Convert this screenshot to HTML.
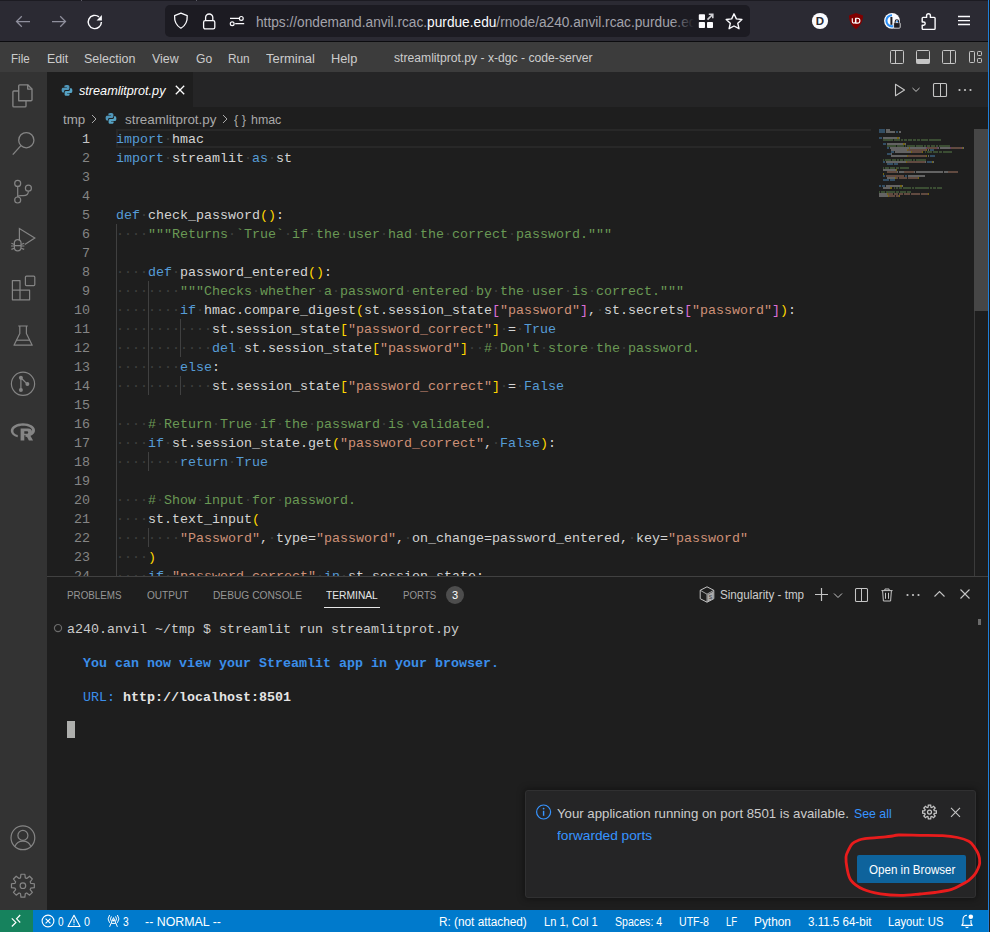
<!DOCTYPE html>
<html><head><meta charset="utf-8"><style>
html,body{margin:0;padding:0;}
body{width:990px;height:932px;overflow:hidden;position:relative;background:#1e1e1e;font-family:"Liberation Sans",sans-serif;}
.r,.t,.s{position:absolute;}
.t{white-space:pre;transform-origin:0 0;}
.m{font-family:"Liberation Mono",monospace;font-size:13.333px;line-height:13.333px;}
</style></head><body>
<div class="r" style="left:0px;top:0px;width:990px;height:1px;background:#1c1b22;"></div>
<div class="r" style="left:0px;top:1px;width:990px;height:40px;background:#2b2a33;"></div>
<div class="r" style="left:0px;top:41px;width:990px;height:1px;background:#0c0c0f;"></div>
<div class="r" style="left:81px;top:0px;width:1px;height:1px;background:#5b5b66;"></div>
<div class="r" style="left:196px;top:0px;width:1px;height:1px;background:#5b5b66;"></div>
<svg class="s" style="left:10px;top:10px;" width="30" height="24" viewBox="0 0 30 24"><path d="M6.5 11.5h13.5M11.8 6.2l-5.3 5.3 5.3 5.3" fill="none" stroke="#8f8f9d" stroke-width="1.25"/></svg>
<svg class="s" style="left:46px;top:10px;" width="30" height="24" viewBox="0 0 30 24"><path d="M6 11.5h13.5M14.2 6.2l5.3 5.3-5.3 5.3" fill="none" stroke="#8f8f9d" stroke-width="1.25"/></svg>
<svg class="s" style="left:84px;top:11px;" width="22" height="22" viewBox="0 0 22 22"><path d="M15 5.9A6.6 6.6 0 1 0 17.4 11" fill="none" stroke="#fbfbfe" stroke-width="1.45"/><path d="M12.6 9.4L17.9 4.1v5.3z" fill="#fbfbfe"/></svg>
<div class="r" style="left:165px;top:5px;width:585px;height:32px;background:#1c1b22;border-radius:5px;"></div>
<svg class="s" style="left:170px;top:10px;" width="22" height="22" viewBox="0 0 22 22"><path d="M10.9 3.2l6.3 2.4c.3 5.2-1.6 10-6.3 12.6C6.2 15.6 4.3 10.8 4.6 5.6z" fill="none" stroke="#fbfbfe" stroke-width="1.3" stroke-linejoin="round"/></svg>
<svg class="s" style="left:200px;top:10px;" width="20" height="22" viewBox="0 0 20 22"><path d="M5.6 10.5V7.6a3.6 3.6 0 0 1 7.2 0v2.9" fill="none" stroke="#fbfbfe" stroke-width="1.3"/><rect x="3.6" y="10.6" width="11.2" height="8.3" rx="1.6" fill="none" stroke="#fbfbfe" stroke-width="1.3"/></svg>
<svg class="s" style="left:226px;top:10px;" width="22" height="22" viewBox="0 0 22 22"><path d="M4 8.4h9M9.2 13.7h9" stroke="#fbfbfe" stroke-width="1.3"/><circle cx="15.3" cy="8.4" r="1.9" fill="none" stroke="#fbfbfe" stroke-width="1.2"/><circle cx="6.2" cy="13.7" r="1.9" fill="none" stroke="#fbfbfe" stroke-width="1.2"/></svg>
<div class="t" style="left:255.50px;top:15.35px;font-size:14px;line-height:14px;color:#a3a3ab;font-family:'Liberation Sans', sans-serif;transform:scaleX(0.9772);">https://ondemand.anvil.rcac.<span style="color:#fbfbfe">purdue.edu</span>/rnode/a240.anvil.rcac.purdue.edu</div>
<div class="r" style="left:672px;top:6px;width:22px;height:30px;background:linear-gradient(90deg, rgba(28,27,34,0), #1c1b22);"></div>
<div class="r" style="left:694px;top:6px;width:54px;height:30px;background:#1c1b22;"></div>
<svg class="s" style="left:696px;top:11px;" width="20" height="20" viewBox="0 0 20 20"><rect x="2.8" y="3.2" width="6.2" height="5.8" rx=".8" fill="#fbfbfe"/><rect x="2.8" y="11" width="6.2" height="6" rx=".8" fill="#fbfbfe"/><rect x="11" y="11" width="6" height="6" rx=".8" fill="#fbfbfe"/><path d="M11.5 8.6l5-5M12.8 3.2h4v4" fill="none" stroke="#d0d0d5" stroke-width="1.6"/></svg>
<svg class="s" style="left:723px;top:11px;" width="22" height="20" viewBox="0 0 22 20"><path d="M11 2.8l2.4 5.1 5.5.6-4.1 3.8 1.2 5.4L11 15l-4.9 2.7 1.2-5.4-4.1-3.8 5.5-.6z" fill="none" stroke="#fbfbfe" stroke-width="1.4" stroke-linejoin="round"/></svg>
<svg class="s" style="left:810px;top:11px;" width="20" height="20" viewBox="0 0 20 20"><circle cx="10" cy="10" r="8.1" fill="#fbfbfe"/><text x="10" y="14.3" text-anchor="middle" font-family="Liberation Sans" font-weight="bold" font-size="11.5" fill="#2b2a33">D</text></svg>
<svg class="s" style="left:846px;top:11px;" width="20" height="20" viewBox="0 0 20 20"><path d="M10 2l7 2.5c0 6-2.5 10-7 13.7C5.5 14.5 3 10.5 3 4.5z" fill="#800000"/><path d="M6.3 7.3v3.2a1.6 1.6 0 0 0 3.2 0V7.3M9.9 7.3h1.6a2.4 2.4 0 0 1 0 4.8H9.9z" fill="none" stroke="#fff" stroke-width="1.1"/></svg>
<svg class="s" style="left:882px;top:11px;" width="20" height="20" viewBox="0 0 20 20"><circle cx="10" cy="9.8" r="7.9" fill="#fbfbfe"/><path d="M10 4.2A5.6 5.6 0 1 0 15.6 9.8" fill="none" stroke="#2a8ff7" stroke-width="2.1"/><rect x="8.4" y="6" width="2" height="7.8" fill="#1c1b22"/><rect x="11.6" y="11.6" width="6.6" height="5.6" rx="1" fill="#1c1b22" stroke="#fbfbfe" stroke-width=".8"/><path d="M13.2 11.8v-1.3a1.7 1.7 0 0 1 3.4 0v1.3" fill="none" stroke="#1c1b22" stroke-width="1.1"/></svg>
<svg class="s" style="left:918px;top:9px;" width="22" height="24" viewBox="0 0 22 24"><path d="M5 8.4h3.6V6.6a1.9 1.9 0 0 1 3.8 0v1.8h3.8c.5 0 .9.4.9.9v10.2c0 .5-.4.9-.9.9H5.1c-.5 0-.9-.4-.9-.9v-3.3h1.4a1.6 1.6 0 0 0 0-3.2H4.2V9.3c0-.5.4-.9.8-.9z" fill="none" stroke="#fbfbfe" stroke-width="1.4" stroke-linejoin="round"/></svg>
<svg class="s" style="left:954px;top:11px;" width="20" height="20" viewBox="0 0 20 20"><path d="M4 5.5h12M4 9.6h12M4 13.5h12" stroke="#fbfbfe" stroke-width="1.4"/></svg>
<div class="r" style="left:0px;top:42px;width:988px;height:30px;background:#3c3c3c;"></div>
<div class="t" style="left:11.10px;top:52.19px;font-size:13px;line-height:13px;color:#cccccc;font-family:'Liberation Sans', sans-serif;font-weight:normal;font-style:normal;transform:scaleX(0.8900);">File</div>
<div class="t" style="left:46.50px;top:52.19px;font-size:13px;line-height:13px;color:#cccccc;font-family:'Liberation Sans', sans-serif;font-weight:normal;font-style:normal;transform:scaleX(0.9464);">Edit</div>
<div class="t" style="left:84.40px;top:52.19px;font-size:13px;line-height:13px;color:#cccccc;font-family:'Liberation Sans', sans-serif;font-weight:normal;font-style:normal;transform:scaleX(0.9607);">Selection</div>
<div class="t" style="left:151.90px;top:52.19px;font-size:13px;line-height:13px;color:#cccccc;font-family:'Liberation Sans', sans-serif;font-weight:normal;font-style:normal;transform:scaleX(0.9573);">View</div>
<div class="t" style="left:195.50px;top:52.19px;font-size:13px;line-height:13px;color:#cccccc;font-family:'Liberation Sans', sans-serif;font-weight:normal;font-style:normal;transform:scaleX(0.9306);">Go</div>
<div class="t" style="left:228.40px;top:52.19px;font-size:13px;line-height:13px;color:#cccccc;font-family:'Liberation Sans', sans-serif;font-weight:normal;font-style:normal;transform:scaleX(0.9076);">Run</div>
<div class="t" style="left:266.40px;top:52.19px;font-size:13px;line-height:13px;color:#cccccc;font-family:'Liberation Sans', sans-serif;font-weight:normal;font-style:normal;transform:scaleX(0.9959);">Terminal</div>
<div class="t" style="left:331.40px;top:52.19px;font-size:13px;line-height:13px;color:#cccccc;font-family:'Liberation Sans', sans-serif;font-weight:normal;font-style:normal;transform:scaleX(0.9850);">Help</div>
<div class="t" style="left:394.00px;top:52.14px;font-size:12px;line-height:12px;color:#cccccc;font-family:'Liberation Sans', sans-serif;font-weight:normal;font-style:normal;transform:scaleX(1.0133);">streamlitprot.py - x-dgc - code-server</div>
<svg class="s" style="left:888px;top:48px;" width="18" height="18" viewBox="0 0 18 18"><rect x="2.5" y="2.5" width="13" height="13" rx="1" fill="none" stroke="#c5c5c5"/><path d="M7.5 2.5v13" stroke="#c5c5c5"/></svg>
<svg class="s" style="left:914px;top:48px;" width="18" height="18" viewBox="0 0 18 18"><rect x="2.5" y="2.5" width="13" height="13" rx="1" fill="none" stroke="#c5c5c5"/><rect x="2.5" y="11" width="13" height="4.5" fill="#c5c5c5"/></svg>
<svg class="s" style="left:940px;top:48px;" width="18" height="18" viewBox="0 0 18 18"><rect x="2.5" y="2.5" width="13" height="13" rx="1" fill="none" stroke="#c5c5c5"/><path d="M10.5 2.5v13" stroke="#c5c5c5"/></svg>
<svg class="s" style="left:966px;top:48px;" width="18" height="18" viewBox="0 0 18 18"><rect x="3.5" y="3.5" width="5" height="11" rx=".8" fill="none" stroke="#c5c5c5"/><rect x="11.5" y="3.5" width="4" height="4" rx=".8" fill="none" stroke="#c5c5c5"/><rect x="11.5" y="10.5" width="4" height="4" rx=".8" fill="none" stroke="#c5c5c5"/></svg>
<div class="r" style="left:0px;top:72px;width:47px;height:838px;background:#333333;"></div>
<svg class="s" style="left:0px;top:72px;" width="48" height="48" viewBox="0 0 48 48"><g fill="none" stroke="#858585" stroke-width="1.35" stroke-linejoin="round"><path d="M18.7 28.7V13.8c0-.6.4-1 1-1h8l4.3 4.3v10.6c0 .6-.4 1-1 1z"/><path d="M27.7 12.8v4.3h4.3"/><path d="M18.7 19h-4.8c-.6 0-1 .4-1 1v13.9c0 .6.4 1 1 1h11.1c.6 0 1-.4 1-1v-5.2"/></g></svg>
<svg class="s" style="left:0px;top:120px;" width="48" height="48" viewBox="0 0 48 48"><g fill="none" stroke="#858585" stroke-width="1.3"><circle cx="26.3" cy="20.2" r="7.6"/><path d="M20.9 25.6L12.8 34.6"/></g></svg>
<svg class="s" style="left:0px;top:168px;" width="48" height="48" viewBox="0 0 48 48"><g fill="none" stroke="#858585" stroke-width="1.2"><circle cx="17.7" cy="15.4" r="3"/><circle cx="17.7" cy="32" r="3"/><circle cx="28.4" cy="20.2" r="3"/><path d="M17.7 18.4v10.6M28.4 23.2c0 3.5-2 4.4-5 4.4h-2.5c-2 0-3.2.8-3.2 1.4"/></g></svg>
<svg class="s" style="left:0px;top:216px;" width="48" height="48" viewBox="0 0 48 48"><g fill="none" stroke="#858585" stroke-width="1.2"><path d="M19.4 24.4V12.5L34.8 22l-10 6.4"/><path d="M14.4 26.2a3.4 3.4 0 0 1 6.6 0v5.3a3.3 3.3 0 0 1-6.6 0z"/><path d="M11.4 27.3l3 1.2M24.2 27.3l-3 1.2M11.4 33.4l3-1.2M24.2 33.4l-3-1.2M11 30h3.4M21 30h3.4M14.4 29.6h6.6"/></g></svg>
<svg class="s" style="left:0px;top:264px;" width="48" height="48" viewBox="0 0 48 48"><g fill="none" stroke="#858585" stroke-width="1.2" stroke-linejoin="round"><path d="M12.4 16.6h7.6v9.6h9.6v9.6h-17.2z"/><path d="M20 26.2h-7.6M20 26.2v9.6"/><rect x="25.4" y="12.2" width="9.4" height="9.4" rx="1"/></g></svg>
<svg class="s" style="left:0px;top:312px;" width="48" height="48" viewBox="0 0 48 48"><g fill="none" stroke="#858585" stroke-width="1.2" stroke-linejoin="round"><path d="M18.2 14h9.6M19.8 14v7.6l-5.8 11.6h18.2l-5.8-11.6V14"/><path d="M16.2 28.2h13.8"/></g></svg>
<svg class="s" style="left:0px;top:360px;" width="48" height="48" viewBox="0 0 48 48"><g fill="none" stroke="#858585" stroke-width="1.2"><circle cx="23" cy="23.8" r="11.6"/><path d="M20.9 17.8v12.2M20.9 17.8l6.4 6.3"/></g><g fill="#858585"><circle cx="20.9" cy="17.7" r="2"/><circle cx="27.4" cy="24.1" r="2"/><circle cx="20.9" cy="30" r="2"/></g></svg>
<svg class="s" style="left:0px;top:408px;" width="48" height="48" viewBox="0 0 48 48"><g fill="#858585"><path fill-rule="evenodd" d="M23 15.2c6.7 0 12 3.1 12 7s-4.3 6.3-9.4 6.9l-.1-2.4c3.8-.5 6.6-2.2 6.6-4.5 0-2.7-4.2-4.5-9.1-4.5s-9.6 2.2-9.6 5.2c0 2 1.6 3.4 4.4 4.2l-.1 2.2C13.6 28.3 10.8 25.9 10.8 22.6c0-4.1 5.4-7.4 12.2-7.4z"/><path fill-rule="evenodd" d="M20.6 20.6h7.4c2.4 0 4 1.2 4 3.2 0 1.4-.9 2.4-2.2 2.9l3.3 5.8h-4.2l-2.8-5.2h-1.8v5.2h-3.7zm3.7 2.6v2.6h2.4c.9 0 1.5-.5 1.5-1.3s-.6-1.3-1.5-1.3z"/></g></svg>
<svg class="s" style="left:0px;top:814px;" width="48" height="48" viewBox="0 0 48 48"><g fill="none" stroke="#858585" stroke-width="1.2"><circle cx="22.9" cy="23.8" r="11.9"/><circle cx="22.9" cy="21.4" r="5"/><path d="M15 32.4c1.2-3.3 4.1-5.2 7.9-5.2s6.7 1.9 7.9 5.2"/></g></svg>
<svg class="s" style="left:0px;top:862px;" width="48" height="48" viewBox="0 0 48 48"><g fill="none" stroke="#858585" stroke-width="1.2" stroke-linejoin="round"><path d="M34.33 21.74L34.33 25.66L30.73 26.12L30.15 27.53L32.37 30.40L29.60 33.17L26.73 30.95L25.32 31.53L24.86 35.13L20.94 35.13L20.48 31.53L19.07 30.95L16.20 33.17L13.43 30.40L15.65 27.53L15.07 26.12L11.47 25.66L11.47 21.74L15.07 21.28L15.65 19.87L13.43 17.00L16.20 14.23L19.07 16.45L20.48 15.87L20.94 12.27L24.86 12.27L25.32 15.87L26.73 16.45L29.60 14.23L32.37 17.00L30.15 19.87L30.73 21.28z"/><circle cx="22.9" cy="23.7" r="2.8"/></g></svg>
<div class="r" style="left:47px;top:72px;width:941px;height:35px;background:#252526;"></div>
<div class="r" style="left:47px;top:72px;width:146px;height:35px;background:#1e1e1e;"></div>
<svg class="s" style="left:60.5px;top:83.5px;" width="13" height="13" viewBox="0 0 13 13"><path d="M5.9 1c-2.6 0-2.5 1.1-2.5 1.1v1.2h2.5v.4H2.3S.6 3.5.6 6.1s1.5 2.5 1.5 2.5h.9V7.4s0-1.5 1.5-1.5h2.5s1.4 0 1.4-1.4V2.4S8.6 1 5.9 1z" fill="#4f95b8"/><path d="M6.1 11.8c2.6 0 2.5-1.1 2.5-1.1V9.5H6.1v-.4h3.6s1.7.2 1.7-2.4-1.5-2.5-1.5-2.5H9v1.2s0 1.5-1.5 1.5H5S3.6 6.9 3.6 8.3v2.1s-.2 1.4 2.5 1.4z" fill="#56a3c4"/></svg>
<div class="t" style="left:78.80px;top:83.99px;font-size:13px;line-height:13px;color:#ffffff;font-family:'Liberation Sans', sans-serif;font-weight:normal;font-style:italic;transform:scaleX(0.9732);">streamlitprot.py</div>
<svg class="s" style="left:172px;top:82px;" width="16" height="16" viewBox="0 0 16 16"><path d="M3.8 3.8l8.4 8.4M12.2 3.8l-8.4 8.4" stroke="#ffffff" stroke-width="1.3"/></svg>
<svg class="s" style="left:890px;top:80px;" width="20" height="20" viewBox="0 0 20 20"><path d="M5.5 4.3v11.4l9-5.7z" fill="none" stroke="#c5c5c5" stroke-width="1.1" stroke-linejoin="round"/></svg>
<svg class="s" style="left:910px;top:83px;" width="12" height="12" viewBox="0 0 12 12"><path d="M2.5 5l3.5 3.4L9.5 5" fill="none" stroke="#c5c5c5" stroke-width="1"/></svg>
<svg class="s" style="left:930px;top:80px;" width="20" height="20" viewBox="0 0 20 20"><rect x="3.5" y="3.5" width="13" height="13" rx="1" fill="none" stroke="#c5c5c5" stroke-width="1.1"/><path d="M10.5 3.5v13" stroke="#c5c5c5" stroke-width="1"/></svg>
<svg class="s" style="left:955px;top:80px;" width="20" height="20" viewBox="0 0 20 20"><circle cx="4.5" cy="10" r="1.1" fill="#c5c5c5"/><circle cx="10" cy="10" r="1.1" fill="#c5c5c5"/><circle cx="15.5" cy="10" r="1.1" fill="#c5c5c5"/></svg>
<div class="r" style="left:47px;top:107px;width:941px;height:22px;background:#1e1e1e;"></div>
<div class="t" style="left:63.00px;top:113.39px;font-size:13px;line-height:13px;color:#a9a9a9;font-family:'Liberation Sans', sans-serif;font-weight:normal;font-style:normal;transform:scaleX(1.0276);">tmp</div>
<svg class="s" style="left:88px;top:111px;" width="12" height="16" viewBox="0 0 12 16"><path d="M4 4l4 4-4 4" fill="none" stroke="#a9a9a9" stroke-width="1"/></svg>
<svg class="s" style="left:105px;top:112px;" width="13" height="13" viewBox="0 0 13 13"><path d="M5.9 1c-2.6 0-2.5 1.1-2.5 1.1v1.2h2.5v.4H2.3S.6 3.5.6 6.1s1.5 2.5 1.5 2.5h.9V7.4s0-1.5 1.5-1.5h2.5s1.4 0 1.4-1.4V2.4S8.6 1 5.9 1z" fill="#4f95b8"/><path d="M6.1 11.8c2.6 0 2.5-1.1 2.5-1.1V9.5H6.1v-.4h3.6s1.7.2 1.7-2.4-1.5-2.5-1.5-2.5H9v1.2s0 1.5-1.5 1.5H5S3.6 6.9 3.6 8.3v2.1s-.2 1.4 2.5 1.4z" fill="#56a3c4"/></svg>
<div class="t" style="left:124.80px;top:113.39px;font-size:13px;line-height:13px;color:#a9a9a9;font-family:'Liberation Sans', sans-serif;font-weight:normal;font-style:normal;transform:scaleX(1.0281);">streamlitprot.py</div>
<svg class="s" style="left:219px;top:111px;" width="12" height="16" viewBox="0 0 12 16"><path d="M4 4l4 4-4 4" fill="none" stroke="#a9a9a9" stroke-width="1"/></svg>
<div class="t" style="left:234.40px;top:114.24px;font-size:12px;line-height:12px;color:#a9a9a9;font-family:'Liberation Sans', sans-serif;font-weight:normal;font-style:normal;transform:scaleX(1.0614);">{ }</div>
<div class="t" style="left:251.40px;top:113.39px;font-size:13px;line-height:13px;color:#a9a9a9;font-family:'Liberation Sans', sans-serif;font-weight:normal;font-style:normal;transform:scaleX(0.9528);">hmac</div>
<div class="r" style="left:47px;top:129px;width:941px;height:447px;background:#1e1e1e;"></div>
<div class="r" style="left:116px;top:129px;width:755px;height:19px;background:transparent;box-sizing:border-box;border:2px solid #282828;border-right:none;"></div>
<div class="r" style="left:116px;top:224px;width:1px;height:19px;background:#404040;"></div>
<div class="r" style="left:116px;top:243px;width:1px;height:19px;background:#404040;"></div>
<div class="r" style="left:116px;top:262px;width:1px;height:19px;background:#404040;"></div>
<div class="r" style="left:116px;top:281px;width:1px;height:19px;background:#404040;"></div>
<div class="r" style="left:148px;top:281px;width:1px;height:19px;background:#404040;"></div>
<div class="r" style="left:116px;top:300px;width:1px;height:19px;background:#404040;"></div>
<div class="r" style="left:148px;top:300px;width:1px;height:19px;background:#404040;"></div>
<div class="r" style="left:116px;top:319px;width:1px;height:19px;background:#404040;"></div>
<div class="r" style="left:148px;top:319px;width:1px;height:19px;background:#404040;"></div>
<div class="r" style="left:180px;top:319px;width:1px;height:19px;background:#404040;"></div>
<div class="r" style="left:116px;top:338px;width:1px;height:19px;background:#404040;"></div>
<div class="r" style="left:148px;top:338px;width:1px;height:19px;background:#404040;"></div>
<div class="r" style="left:180px;top:338px;width:1px;height:19px;background:#404040;"></div>
<div class="r" style="left:116px;top:357px;width:1px;height:19px;background:#404040;"></div>
<div class="r" style="left:148px;top:357px;width:1px;height:19px;background:#404040;"></div>
<div class="r" style="left:116px;top:376px;width:1px;height:19px;background:#404040;"></div>
<div class="r" style="left:148px;top:376px;width:1px;height:19px;background:#404040;"></div>
<div class="r" style="left:180px;top:376px;width:1px;height:19px;background:#404040;"></div>
<div class="r" style="left:116px;top:395px;width:1px;height:19px;background:#404040;"></div>
<div class="r" style="left:116px;top:414px;width:1px;height:19px;background:#404040;"></div>
<div class="r" style="left:116px;top:433px;width:1px;height:19px;background:#404040;"></div>
<div class="r" style="left:116px;top:452px;width:1px;height:19px;background:#404040;"></div>
<div class="r" style="left:148px;top:452px;width:1px;height:19px;background:#404040;"></div>
<div class="r" style="left:116px;top:471px;width:1px;height:19px;background:#404040;"></div>
<div class="r" style="left:116px;top:490px;width:1px;height:19px;background:#404040;"></div>
<div class="r" style="left:116px;top:509px;width:1px;height:19px;background:#404040;"></div>
<div class="r" style="left:116px;top:528px;width:1px;height:19px;background:#404040;"></div>
<div class="r" style="left:148px;top:528px;width:1px;height:19px;background:#404040;"></div>
<div class="r" style="left:116px;top:547px;width:1px;height:19px;background:#404040;"></div>
<div class="r" style="left:116px;top:566px;width:1px;height:10px;background:#404040;"></div>
<div class="t m" style="left:82px;top:132.79px;color:#c6c6c6">1</div>
<div class="t m" style="left:116px;top:132.79px;"><span style="color:#569cd6">import</span><span style="color:#404040">·</span><span style="color:#d4d4d4">hmac</span></div>
<div class="t m" style="left:82px;top:151.79px;color:#858585">2</div>
<div class="t m" style="left:116px;top:151.79px;"><span style="color:#569cd6">import</span><span style="color:#404040">·</span><span style="color:#d4d4d4">streamlit</span><span style="color:#404040">·</span><span style="color:#569cd6">as</span><span style="color:#404040">·</span><span style="color:#d4d4d4">st</span></div>
<div class="t m" style="left:82px;top:170.79px;color:#858585">3</div>
<div class="t m" style="left:116px;top:170.79px;"></div>
<div class="t m" style="left:82px;top:189.79px;color:#858585">4</div>
<div class="t m" style="left:116px;top:189.79px;"></div>
<div class="t m" style="left:82px;top:208.79px;color:#858585">5</div>
<div class="t m" style="left:116px;top:208.79px;"><span style="color:#569cd6">def</span><span style="color:#404040">·</span><span style="color:#d4d4d4">check_password</span><span style="color:#ffd700">(</span><span style="color:#ffd700">)</span><span style="color:#d4d4d4">:</span></div>
<div class="t m" style="left:82px;top:227.79px;color:#858585">6</div>
<div class="t m" style="left:116px;top:227.79px;"><span style="color:#404040">·</span><span style="color:#404040">·</span><span style="color:#404040">·</span><span style="color:#404040">·</span><span style="color:#6a9955">&quot;&quot;&quot;Returns</span><span style="color:#404040">·</span><span style="color:#6a9955">`True`</span><span style="color:#404040">·</span><span style="color:#6a9955">if</span><span style="color:#404040">·</span><span style="color:#6a9955">the</span><span style="color:#404040">·</span><span style="color:#6a9955">user</span><span style="color:#404040">·</span><span style="color:#6a9955">had</span><span style="color:#404040">·</span><span style="color:#6a9955">the</span><span style="color:#404040">·</span><span style="color:#6a9955">correct</span><span style="color:#404040">·</span><span style="color:#6a9955">password.&quot;&quot;&quot;</span></div>
<div class="t m" style="left:82px;top:246.79px;color:#858585">7</div>
<div class="t m" style="left:116px;top:246.79px;"></div>
<div class="t m" style="left:82px;top:265.79px;color:#858585">8</div>
<div class="t m" style="left:116px;top:265.79px;"><span style="color:#404040">·</span><span style="color:#404040">·</span><span style="color:#404040">·</span><span style="color:#404040">·</span><span style="color:#569cd6">def</span><span style="color:#404040">·</span><span style="color:#d4d4d4">password_entered</span><span style="color:#ffd700">(</span><span style="color:#ffd700">)</span><span style="color:#d4d4d4">:</span></div>
<div class="t m" style="left:82px;top:284.79px;color:#858585">9</div>
<div class="t m" style="left:116px;top:284.79px;"><span style="color:#404040">·</span><span style="color:#404040">·</span><span style="color:#404040">·</span><span style="color:#404040">·</span><span style="color:#404040">·</span><span style="color:#404040">·</span><span style="color:#404040">·</span><span style="color:#404040">·</span><span style="color:#6a9955">&quot;&quot;&quot;Checks</span><span style="color:#404040">·</span><span style="color:#6a9955">whether</span><span style="color:#404040">·</span><span style="color:#6a9955">a</span><span style="color:#404040">·</span><span style="color:#6a9955">password</span><span style="color:#404040">·</span><span style="color:#6a9955">entered</span><span style="color:#404040">·</span><span style="color:#6a9955">by</span><span style="color:#404040">·</span><span style="color:#6a9955">the</span><span style="color:#404040">·</span><span style="color:#6a9955">user</span><span style="color:#404040">·</span><span style="color:#6a9955">is</span><span style="color:#404040">·</span><span style="color:#6a9955">correct.&quot;&quot;&quot;</span></div>
<div class="t m" style="left:74px;top:303.79px;color:#858585">10</div>
<div class="t m" style="left:116px;top:303.79px;"><span style="color:#404040">·</span><span style="color:#404040">·</span><span style="color:#404040">·</span><span style="color:#404040">·</span><span style="color:#404040">·</span><span style="color:#404040">·</span><span style="color:#404040">·</span><span style="color:#404040">·</span><span style="color:#569cd6">if</span><span style="color:#404040">·</span><span style="color:#d4d4d4">hmac</span><span style="color:#d4d4d4">.</span><span style="color:#d4d4d4">compare_digest</span><span style="color:#ffd700">(</span><span style="color:#d4d4d4">st</span><span style="color:#d4d4d4">.</span><span style="color:#d4d4d4">session_state</span><span style="color:#da70d6">[</span><span style="color:#ce9178">&quot;password&quot;</span><span style="color:#da70d6">]</span><span style="color:#d4d4d4">,</span><span style="color:#404040">·</span><span style="color:#d4d4d4">st</span><span style="color:#d4d4d4">.</span><span style="color:#d4d4d4">secrets</span><span style="color:#da70d6">[</span><span style="color:#ce9178">&quot;password&quot;</span><span style="color:#da70d6">]</span><span style="color:#ffd700">)</span><span style="color:#d4d4d4">:</span></div>
<div class="t m" style="left:74px;top:322.79px;color:#858585">11</div>
<div class="t m" style="left:116px;top:322.79px;"><span style="color:#404040">·</span><span style="color:#404040">·</span><span style="color:#404040">·</span><span style="color:#404040">·</span><span style="color:#404040">·</span><span style="color:#404040">·</span><span style="color:#404040">·</span><span style="color:#404040">·</span><span style="color:#404040">·</span><span style="color:#404040">·</span><span style="color:#404040">·</span><span style="color:#404040">·</span><span style="color:#d4d4d4">st</span><span style="color:#d4d4d4">.</span><span style="color:#d4d4d4">session_state</span><span style="color:#ffd700">[</span><span style="color:#ce9178">&quot;password_correct&quot;</span><span style="color:#ffd700">]</span><span style="color:#404040">·</span><span style="color:#d4d4d4">=</span><span style="color:#404040">·</span><span style="color:#569cd6">True</span></div>
<div class="t m" style="left:74px;top:341.79px;color:#858585">12</div>
<div class="t m" style="left:116px;top:341.79px;"><span style="color:#404040">·</span><span style="color:#404040">·</span><span style="color:#404040">·</span><span style="color:#404040">·</span><span style="color:#404040">·</span><span style="color:#404040">·</span><span style="color:#404040">·</span><span style="color:#404040">·</span><span style="color:#404040">·</span><span style="color:#404040">·</span><span style="color:#404040">·</span><span style="color:#404040">·</span><span style="color:#569cd6">del</span><span style="color:#404040">·</span><span style="color:#d4d4d4">st</span><span style="color:#d4d4d4">.</span><span style="color:#d4d4d4">session_state</span><span style="color:#ffd700">[</span><span style="color:#ce9178">&quot;password&quot;</span><span style="color:#ffd700">]</span><span style="color:#404040">·</span><span style="color:#404040">·</span><span style="color:#6a9955">#</span><span style="color:#404040">·</span><span style="color:#6a9955">Don&#x27;t</span><span style="color:#404040">·</span><span style="color:#6a9955">store</span><span style="color:#404040">·</span><span style="color:#6a9955">the</span><span style="color:#404040">·</span><span style="color:#6a9955">password.</span></div>
<div class="t m" style="left:74px;top:360.79px;color:#858585">13</div>
<div class="t m" style="left:116px;top:360.79px;"><span style="color:#404040">·</span><span style="color:#404040">·</span><span style="color:#404040">·</span><span style="color:#404040">·</span><span style="color:#404040">·</span><span style="color:#404040">·</span><span style="color:#404040">·</span><span style="color:#404040">·</span><span style="color:#569cd6">else</span><span style="color:#d4d4d4">:</span></div>
<div class="t m" style="left:74px;top:379.79px;color:#858585">14</div>
<div class="t m" style="left:116px;top:379.79px;"><span style="color:#404040">·</span><span style="color:#404040">·</span><span style="color:#404040">·</span><span style="color:#404040">·</span><span style="color:#404040">·</span><span style="color:#404040">·</span><span style="color:#404040">·</span><span style="color:#404040">·</span><span style="color:#404040">·</span><span style="color:#404040">·</span><span style="color:#404040">·</span><span style="color:#404040">·</span><span style="color:#d4d4d4">st</span><span style="color:#d4d4d4">.</span><span style="color:#d4d4d4">session_state</span><span style="color:#ffd700">[</span><span style="color:#ce9178">&quot;password_correct&quot;</span><span style="color:#ffd700">]</span><span style="color:#404040">·</span><span style="color:#d4d4d4">=</span><span style="color:#404040">·</span><span style="color:#569cd6">False</span></div>
<div class="t m" style="left:74px;top:398.79px;color:#858585">15</div>
<div class="t m" style="left:116px;top:398.79px;"></div>
<div class="t m" style="left:74px;top:417.79px;color:#858585">16</div>
<div class="t m" style="left:116px;top:417.79px;"><span style="color:#404040">·</span><span style="color:#404040">·</span><span style="color:#404040">·</span><span style="color:#404040">·</span><span style="color:#6a9955">#</span><span style="color:#404040">·</span><span style="color:#6a9955">Return</span><span style="color:#404040">·</span><span style="color:#6a9955">True</span><span style="color:#404040">·</span><span style="color:#6a9955">if</span><span style="color:#404040">·</span><span style="color:#6a9955">the</span><span style="color:#404040">·</span><span style="color:#6a9955">passward</span><span style="color:#404040">·</span><span style="color:#6a9955">is</span><span style="color:#404040">·</span><span style="color:#6a9955">validated.</span></div>
<div class="t m" style="left:74px;top:436.79px;color:#858585">17</div>
<div class="t m" style="left:116px;top:436.79px;"><span style="color:#404040">·</span><span style="color:#404040">·</span><span style="color:#404040">·</span><span style="color:#404040">·</span><span style="color:#569cd6">if</span><span style="color:#404040">·</span><span style="color:#d4d4d4">st</span><span style="color:#d4d4d4">.</span><span style="color:#d4d4d4">session_state</span><span style="color:#d4d4d4">.</span><span style="color:#d4d4d4">get</span><span style="color:#ffd700">(</span><span style="color:#ce9178">&quot;password_correct&quot;</span><span style="color:#d4d4d4">,</span><span style="color:#404040">·</span><span style="color:#569cd6">False</span><span style="color:#ffd700">)</span><span style="color:#d4d4d4">:</span></div>
<div class="t m" style="left:74px;top:455.79px;color:#858585">18</div>
<div class="t m" style="left:116px;top:455.79px;"><span style="color:#404040">·</span><span style="color:#404040">·</span><span style="color:#404040">·</span><span style="color:#404040">·</span><span style="color:#404040">·</span><span style="color:#404040">·</span><span style="color:#404040">·</span><span style="color:#404040">·</span><span style="color:#569cd6">return</span><span style="color:#404040">·</span><span style="color:#569cd6">True</span></div>
<div class="t m" style="left:74px;top:474.79px;color:#858585">19</div>
<div class="t m" style="left:116px;top:474.79px;"></div>
<div class="t m" style="left:74px;top:493.79px;color:#858585">20</div>
<div class="t m" style="left:116px;top:493.79px;"><span style="color:#404040">·</span><span style="color:#404040">·</span><span style="color:#404040">·</span><span style="color:#404040">·</span><span style="color:#6a9955">#</span><span style="color:#404040">·</span><span style="color:#6a9955">Show</span><span style="color:#404040">·</span><span style="color:#6a9955">input</span><span style="color:#404040">·</span><span style="color:#6a9955">for</span><span style="color:#404040">·</span><span style="color:#6a9955">password.</span></div>
<div class="t m" style="left:74px;top:512.79px;color:#858585">21</div>
<div class="t m" style="left:116px;top:512.79px;"><span style="color:#404040">·</span><span style="color:#404040">·</span><span style="color:#404040">·</span><span style="color:#404040">·</span><span style="color:#d4d4d4">st</span><span style="color:#d4d4d4">.</span><span style="color:#d4d4d4">text_input</span><span style="color:#ffd700">(</span></div>
<div class="t m" style="left:74px;top:531.79px;color:#858585">22</div>
<div class="t m" style="left:116px;top:531.79px;"><span style="color:#404040">·</span><span style="color:#404040">·</span><span style="color:#404040">·</span><span style="color:#404040">·</span><span style="color:#404040">·</span><span style="color:#404040">·</span><span style="color:#404040">·</span><span style="color:#404040">·</span><span style="color:#ce9178">&quot;Password&quot;</span><span style="color:#d4d4d4">,</span><span style="color:#404040">·</span><span style="color:#d4d4d4">type</span><span style="color:#d4d4d4">=</span><span style="color:#ce9178">&quot;password&quot;</span><span style="color:#d4d4d4">,</span><span style="color:#404040">·</span><span style="color:#d4d4d4">on_change</span><span style="color:#d4d4d4">=</span><span style="color:#d4d4d4">password_entered</span><span style="color:#d4d4d4">,</span><span style="color:#404040">·</span><span style="color:#d4d4d4">key</span><span style="color:#d4d4d4">=</span><span style="color:#ce9178">&quot;password&quot;</span></div>
<div class="t m" style="left:74px;top:550.79px;color:#858585">23</div>
<div class="t m" style="left:116px;top:550.79px;"><span style="color:#404040">·</span><span style="color:#404040">·</span><span style="color:#404040">·</span><span style="color:#404040">·</span><span style="color:#ffd700">)</span></div>
<div class="t m" style="left:74px;top:569.79px;color:#858585">24</div>
<div class="t m" style="left:116px;top:569.79px;"><span style="color:#404040">·</span><span style="color:#404040">·</span><span style="color:#404040">·</span><span style="color:#404040">·</span><span style="color:#569cd6">if</span><span style="color:#404040">·</span><span style="color:#ce9178">&quot;password_correct&quot;</span><span style="color:#404040">·</span><span style="color:#569cd6">in</span><span style="color:#404040">·</span><span style="color:#d4d4d4">st</span><span style="color:#d4d4d4">.</span><span style="color:#d4d4d4">session_state</span><span style="color:#d4d4d4">:</span></div>
<svg class="s" style="left:872px;top:129px;opacity:0.38;" width="100" height="80" viewBox="0 0 100 80"><rect x="7" y="0.0" width="6" height="2" fill="#569cd6"/><rect x="14" y="0.0" width="4" height="2" fill="#d4d4d4"/><rect x="7" y="2.0" width="6" height="2" fill="#569cd6"/><rect x="14" y="2.0" width="9" height="2" fill="#d4d4d4"/><rect x="24" y="2.0" width="2" height="2" fill="#569cd6"/><rect x="27" y="2.0" width="2" height="2" fill="#d4d4d4"/><rect x="7" y="8.0" width="3" height="2" fill="#569cd6"/><rect x="11" y="8.0" width="14" height="2" fill="#d4d4d4"/><rect x="25" y="8.0" width="1" height="2" fill="#ffd700"/><rect x="26" y="8.0" width="1" height="2" fill="#ffd700"/><rect x="27" y="8.0" width="1" height="2" fill="#d4d4d4"/><rect x="11" y="10.0" width="10" height="2" fill="#6a9955"/><rect x="22" y="10.0" width="6" height="2" fill="#6a9955"/><rect x="29" y="10.0" width="2" height="2" fill="#6a9955"/><rect x="32" y="10.0" width="3" height="2" fill="#6a9955"/><rect x="36" y="10.0" width="4" height="2" fill="#6a9955"/><rect x="41" y="10.0" width="3" height="2" fill="#6a9955"/><rect x="45" y="10.0" width="3" height="2" fill="#6a9955"/><rect x="49" y="10.0" width="7" height="2" fill="#6a9955"/><rect x="57" y="10.0" width="12" height="2" fill="#6a9955"/><rect x="11" y="14.0" width="3" height="2" fill="#569cd6"/><rect x="15" y="14.0" width="16" height="2" fill="#d4d4d4"/><rect x="31" y="14.0" width="1" height="2" fill="#ffd700"/><rect x="32" y="14.0" width="1" height="2" fill="#ffd700"/><rect x="33" y="14.0" width="1" height="2" fill="#d4d4d4"/><rect x="15" y="16.0" width="9" height="2" fill="#6a9955"/><rect x="25" y="16.0" width="7" height="2" fill="#6a9955"/><rect x="33" y="16.0" width="1" height="2" fill="#6a9955"/><rect x="35" y="16.0" width="8" height="2" fill="#6a9955"/><rect x="44" y="16.0" width="7" height="2" fill="#6a9955"/><rect x="52" y="16.0" width="2" height="2" fill="#6a9955"/><rect x="55" y="16.0" width="3" height="2" fill="#6a9955"/><rect x="59" y="16.0" width="4" height="2" fill="#6a9955"/><rect x="64" y="16.0" width="2" height="2" fill="#6a9955"/><rect x="67" y="16.0" width="11" height="2" fill="#6a9955"/><rect x="15" y="18.0" width="2" height="2" fill="#569cd6"/><rect x="18" y="18.0" width="4" height="2" fill="#d4d4d4"/><rect x="22" y="18.0" width="1" height="2" fill="#d4d4d4"/><rect x="23" y="18.0" width="14" height="2" fill="#d4d4d4"/><rect x="37" y="18.0" width="1" height="2" fill="#ffd700"/><rect x="38" y="18.0" width="2" height="2" fill="#d4d4d4"/><rect x="40" y="18.0" width="1" height="2" fill="#d4d4d4"/><rect x="41" y="18.0" width="13" height="2" fill="#d4d4d4"/><rect x="54" y="18.0" width="1" height="2" fill="#da70d6"/><rect x="55" y="18.0" width="10" height="2" fill="#ce9178"/><rect x="65" y="18.0" width="1" height="2" fill="#da70d6"/><rect x="66" y="18.0" width="1" height="2" fill="#d4d4d4"/><rect x="68" y="18.0" width="2" height="2" fill="#d4d4d4"/><rect x="70" y="18.0" width="1" height="2" fill="#d4d4d4"/><rect x="71" y="18.0" width="7" height="2" fill="#d4d4d4"/><rect x="78" y="18.0" width="1" height="2" fill="#da70d6"/><rect x="79" y="18.0" width="10" height="2" fill="#ce9178"/><rect x="89" y="18.0" width="1" height="2" fill="#da70d6"/><rect x="90" y="18.0" width="1" height="2" fill="#ffd700"/><rect x="91" y="18.0" width="1" height="2" fill="#d4d4d4"/><rect x="19" y="20.0" width="2" height="2" fill="#d4d4d4"/><rect x="21" y="20.0" width="1" height="2" fill="#d4d4d4"/><rect x="22" y="20.0" width="13" height="2" fill="#d4d4d4"/><rect x="35" y="20.0" width="1" height="2" fill="#ffd700"/><rect x="36" y="20.0" width="18" height="2" fill="#ce9178"/><rect x="54" y="20.0" width="1" height="2" fill="#ffd700"/><rect x="56" y="20.0" width="1" height="2" fill="#d4d4d4"/><rect x="58" y="20.0" width="4" height="2" fill="#569cd6"/><rect x="19" y="22.0" width="3" height="2" fill="#569cd6"/><rect x="23" y="22.0" width="2" height="2" fill="#d4d4d4"/><rect x="25" y="22.0" width="1" height="2" fill="#d4d4d4"/><rect x="26" y="22.0" width="13" height="2" fill="#d4d4d4"/><rect x="39" y="22.0" width="1" height="2" fill="#ffd700"/><rect x="40" y="22.0" width="10" height="2" fill="#ce9178"/><rect x="50" y="22.0" width="1" height="2" fill="#ffd700"/><rect x="53" y="22.0" width="1" height="2" fill="#6a9955"/><rect x="55" y="22.0" width="5" height="2" fill="#6a9955"/><rect x="61" y="22.0" width="5" height="2" fill="#6a9955"/><rect x="67" y="22.0" width="3" height="2" fill="#6a9955"/><rect x="71" y="22.0" width="9" height="2" fill="#6a9955"/><rect x="15" y="24.0" width="4" height="2" fill="#569cd6"/><rect x="19" y="24.0" width="1" height="2" fill="#d4d4d4"/><rect x="19" y="26.0" width="2" height="2" fill="#d4d4d4"/><rect x="21" y="26.0" width="1" height="2" fill="#d4d4d4"/><rect x="22" y="26.0" width="13" height="2" fill="#d4d4d4"/><rect x="35" y="26.0" width="1" height="2" fill="#ffd700"/><rect x="36" y="26.0" width="18" height="2" fill="#ce9178"/><rect x="54" y="26.0" width="1" height="2" fill="#ffd700"/><rect x="56" y="26.0" width="1" height="2" fill="#d4d4d4"/><rect x="58" y="26.0" width="5" height="2" fill="#569cd6"/><rect x="11" y="30.0" width="1" height="2" fill="#6a9955"/><rect x="13" y="30.0" width="6" height="2" fill="#6a9955"/><rect x="20" y="30.0" width="4" height="2" fill="#6a9955"/><rect x="25" y="30.0" width="2" height="2" fill="#6a9955"/><rect x="28" y="30.0" width="3" height="2" fill="#6a9955"/><rect x="32" y="30.0" width="8" height="2" fill="#6a9955"/><rect x="41" y="30.0" width="2" height="2" fill="#6a9955"/><rect x="44" y="30.0" width="10" height="2" fill="#6a9955"/><rect x="11" y="32.0" width="2" height="2" fill="#569cd6"/><rect x="14" y="32.0" width="2" height="2" fill="#d4d4d4"/><rect x="16" y="32.0" width="1" height="2" fill="#d4d4d4"/><rect x="17" y="32.0" width="13" height="2" fill="#d4d4d4"/><rect x="30" y="32.0" width="1" height="2" fill="#d4d4d4"/><rect x="31" y="32.0" width="3" height="2" fill="#d4d4d4"/><rect x="34" y="32.0" width="1" height="2" fill="#ffd700"/><rect x="35" y="32.0" width="18" height="2" fill="#ce9178"/><rect x="53" y="32.0" width="1" height="2" fill="#d4d4d4"/><rect x="55" y="32.0" width="5" height="2" fill="#569cd6"/><rect x="60" y="32.0" width="1" height="2" fill="#ffd700"/><rect x="61" y="32.0" width="1" height="2" fill="#d4d4d4"/><rect x="15" y="34.0" width="6" height="2" fill="#569cd6"/><rect x="22" y="34.0" width="4" height="2" fill="#569cd6"/><rect x="11" y="38.0" width="1" height="2" fill="#6a9955"/><rect x="13" y="38.0" width="4" height="2" fill="#6a9955"/><rect x="18" y="38.0" width="5" height="2" fill="#6a9955"/><rect x="24" y="38.0" width="3" height="2" fill="#6a9955"/><rect x="28" y="38.0" width="9" height="2" fill="#6a9955"/><rect x="11" y="40.0" width="2" height="2" fill="#d4d4d4"/><rect x="13" y="40.0" width="1" height="2" fill="#d4d4d4"/><rect x="14" y="40.0" width="10" height="2" fill="#d4d4d4"/><rect x="24" y="40.0" width="1" height="2" fill="#ffd700"/><rect x="15" y="42.0" width="10" height="2" fill="#ce9178"/><rect x="25" y="42.0" width="1" height="2" fill="#d4d4d4"/><rect x="27" y="42.0" width="4" height="2" fill="#d4d4d4"/><rect x="31" y="42.0" width="1" height="2" fill="#d4d4d4"/><rect x="32" y="42.0" width="10" height="2" fill="#ce9178"/><rect x="42" y="42.0" width="1" height="2" fill="#d4d4d4"/><rect x="44" y="42.0" width="9" height="2" fill="#d4d4d4"/><rect x="53" y="42.0" width="1" height="2" fill="#d4d4d4"/><rect x="54" y="42.0" width="16" height="2" fill="#d4d4d4"/><rect x="70" y="42.0" width="1" height="2" fill="#d4d4d4"/><rect x="72" y="42.0" width="3" height="2" fill="#d4d4d4"/><rect x="75" y="42.0" width="1" height="2" fill="#d4d4d4"/><rect x="76" y="42.0" width="10" height="2" fill="#ce9178"/><rect x="11" y="44.0" width="1" height="2" fill="#ffd700"/><rect x="11" y="46.0" width="2" height="2" fill="#569cd6"/><rect x="14" y="46.0" width="18" height="2" fill="#ce9178"/><rect x="33" y="46.0" width="2" height="2" fill="#569cd6"/><rect x="36" y="46.0" width="2" height="2" fill="#d4d4d4"/><rect x="38" y="46.0" width="1" height="2" fill="#d4d4d4"/><rect x="39" y="46.0" width="13" height="2" fill="#d4d4d4"/><rect x="52" y="46.0" width="1" height="2" fill="#d4d4d4"/><rect x="15" y="48.0" width="2" height="2" fill="#d4d4d4"/><rect x="17" y="48.0" width="1" height="2" fill="#d4d4d4"/><rect x="18" y="48.0" width="5" height="2" fill="#d4d4d4"/><rect x="23" y="48.0" width="1" height="2" fill="#ffd700"/><rect x="24" y="48.0" width="2" height="2" fill="#ce9178"/><rect x="27" y="48.0" width="8" height="2" fill="#ce9178"/><rect x="36" y="48.0" width="10" height="2" fill="#ce9178"/><rect x="46" y="48.0" width="1" height="2" fill="#ffd700"/><rect x="11" y="50.0" width="6" height="2" fill="#569cd6"/><rect x="18" y="50.0" width="5" height="2" fill="#569cd6"/><rect x="7" y="56.0" width="2" height="2" fill="#569cd6"/><rect x="10" y="56.0" width="3" height="2" fill="#569cd6"/><rect x="14" y="56.0" width="14" height="2" fill="#d4d4d4"/><rect x="28" y="56.0" width="1" height="2" fill="#ffd700"/><rect x="29" y="56.0" width="1" height="2" fill="#ffd700"/><rect x="30" y="56.0" width="1" height="2" fill="#d4d4d4"/><rect x="11" y="58.0" width="2" height="2" fill="#d4d4d4"/><rect x="13" y="58.0" width="1" height="2" fill="#d4d4d4"/><rect x="14" y="58.0" width="4" height="2" fill="#d4d4d4"/><rect x="18" y="58.0" width="1" height="2" fill="#ffd700"/><rect x="19" y="58.0" width="1" height="2" fill="#ffd700"/><rect x="22" y="58.0" width="1" height="2" fill="#6a9955"/><rect x="24" y="58.0" width="2" height="2" fill="#6a9955"/><rect x="27" y="58.0" width="3" height="2" fill="#6a9955"/><rect x="31" y="58.0" width="8" height="2" fill="#6a9955"/><rect x="40" y="58.0" width="2" height="2" fill="#6a9955"/><rect x="43" y="58.0" width="14" height="2" fill="#6a9955"/><rect x="58" y="58.0" width="2" height="2" fill="#6a9955"/><rect x="61" y="58.0" width="3" height="2" fill="#6a9955"/><rect x="65" y="58.0" width="5" height="2" fill="#6a9955"/><rect x="7" y="62.0" width="1" height="2" fill="#6a9955"/><rect x="9" y="62.0" width="4" height="2" fill="#6a9955"/><rect x="14" y="62.0" width="9" height="2" fill="#6a9955"/><rect x="24" y="62.0" width="3" height="2" fill="#6a9955"/><rect x="28" y="62.0" width="6" height="2" fill="#6a9955"/><rect x="35" y="62.0" width="4" height="2" fill="#6a9955"/><rect x="7" y="64.0" width="2" height="2" fill="#d4d4d4"/><rect x="9" y="64.0" width="1" height="2" fill="#d4d4d4"/><rect x="10" y="64.0" width="5" height="2" fill="#d4d4d4"/><rect x="15" y="64.0" width="1" height="2" fill="#ffd700"/><rect x="16" y="64.0" width="5" height="2" fill="#ce9178"/><rect x="22" y="64.0" width="4" height="2" fill="#ce9178"/><rect x="27" y="64.0" width="4" height="2" fill="#ce9178"/><rect x="32" y="64.0" width="6" height="2" fill="#ce9178"/><rect x="39" y="64.0" width="9" height="2" fill="#ce9178"/><rect x="49" y="64.0" width="7" height="2" fill="#ce9178"/><rect x="56" y="64.0" width="1" height="2" fill="#ffd700"/><rect x="7" y="66.0" width="2" height="2" fill="#d4d4d4"/><rect x="9" y="66.0" width="1" height="2" fill="#d4d4d4"/><rect x="10" y="66.0" width="6" height="2" fill="#d4d4d4"/><rect x="16" y="66.0" width="1" height="2" fill="#ffd700"/><rect x="17" y="66.0" width="6" height="2" fill="#ce9178"/><rect x="24" y="66.0" width="3" height="2" fill="#ce9178"/><rect x="27" y="66.0" width="1" height="2" fill="#ffd700"/></svg>
<div class="r" style="left:974px;top:311px;width:1px;height:265px;background:#3b3b3b;"></div>
<div class="r" style="left:974px;top:129px;width:14px;height:182px;background:#464646;"></div>
<div class="r" style="left:47px;top:576px;width:941px;height:1px;background:#414141;"></div>
<div class="r" style="left:47px;top:577px;width:941px;height:333px;background:#1e1e1e;"></div>
<div class="t" style="left:67.20px;top:589.99px;font-size:11px;line-height:11px;color:#969696;font-family:'Liberation Sans', sans-serif;font-weight:normal;font-style:normal;transform:scaleX(0.8920);">PROBLEMS</div>
<div class="t" style="left:146.60px;top:589.99px;font-size:11px;line-height:11px;color:#969696;font-family:'Liberation Sans', sans-serif;font-weight:normal;font-style:normal;transform:scaleX(0.9159);">OUTPUT</div>
<div class="t" style="left:213.00px;top:589.99px;font-size:11px;line-height:11px;color:#969696;font-family:'Liberation Sans', sans-serif;font-weight:normal;font-style:normal;transform:scaleX(0.9281);">DEBUG CONSOLE</div>
<div class="t" style="left:326.40px;top:589.99px;font-size:11px;line-height:11px;color:#e7e7e7;font-family:'Liberation Sans', sans-serif;font-weight:normal;font-style:normal;transform:scaleX(0.9317);">TERMINAL</div>
<div class="r" style="left:324px;top:607px;width:56px;height:1px;background:#e7e7e7;"></div>
<div class="t" style="left:402.70px;top:589.99px;font-size:11px;line-height:11px;color:#969696;font-family:'Liberation Sans', sans-serif;font-weight:normal;font-style:normal;transform:scaleX(0.8833);">PORTS</div>
<svg class="s" style="left:445px;top:585px;" width="20" height="20" viewBox="0 0 20 20"><circle cx="10" cy="10" r="9" fill="#4d4d4d"/><text x="10" y="14" text-anchor="middle" font-family="Liberation Sans" font-size="11" fill="#ffffff">3</text></svg>
<svg class="s" style="left:698px;top:585px;" width="18" height="19" viewBox="0 0 18 19"><path d="M9 1.8l6.8 3.5v8.4L9 17.2 2.2 13.7V5.3z" fill="none" stroke="#c5c5c5" stroke-width="1"/><path d="M9 9.2l6.8-3.9M9 9.2v8M9 9.2L2.2 5.3" stroke="#c5c5c5" stroke-width=".8" fill="none"/><path d="M9.5 9.8l5.8-3.3v7l-5.8 3.3z" fill="#c5c5c5" opacity=".85"/><text x="12.4" y="14.2" text-anchor="middle" font-family="Liberation Sans" font-size="5" fill="#333">S</text></svg>
<div class="t" style="left:719.50px;top:588.84px;font-size:12px;line-height:12px;color:#cccccc;font-family:'Liberation Sans', sans-serif;font-weight:normal;font-style:normal;transform:scaleX(0.9700);">Singularity - tmp</div>
<svg class="s" style="left:813px;top:586px;" width="17" height="17" viewBox="0 0 17 17"><path d="M8.5 2v13M2 8.5h13" stroke="#c5c5c5" stroke-width="1.2"/></svg>
<svg class="s" style="left:832px;top:589px;" width="12" height="12" viewBox="0 0 12 12"><path d="M2 4.5l4 4 4-4" fill="none" stroke="#c5c5c5" stroke-width="1"/></svg>
<svg class="s" style="left:852px;top:586px;" width="18" height="18" viewBox="0 0 18 18"><rect x="3.5" y="2.5" width="12" height="13" rx="1" fill="none" stroke="#c5c5c5" stroke-width="1.05"/><path d="M9.5 2.5v13" stroke="#c5c5c5" stroke-width="1"/></svg>
<svg class="s" style="left:878px;top:586px;" width="18" height="18" viewBox="0 0 18 18"><g fill="none" stroke="#c5c5c5" stroke-width="1"><path d="M3.4 4.6h11.2M6.9 4.6V3h4.2v1.6M4.6 4.6l.8 10.4h7.2l.8-10.4M7.5 6.8v6M10.5 6.8v6"/></g></svg>
<svg class="s" style="left:904px;top:586px;" width="18" height="18" viewBox="0 0 18 18"><circle cx="3.5" cy="9" r="1.1" fill="#c5c5c5"/><circle cx="9" cy="9" r="1.1" fill="#c5c5c5"/><circle cx="14.5" cy="9" r="1.1" fill="#c5c5c5"/></svg>
<svg class="s" style="left:931px;top:586px;" width="18" height="18" viewBox="0 0 18 18"><path d="M3.5 10.5l5-5 5 5" fill="none" stroke="#c5c5c5" stroke-width="1.1"/></svg>
<svg class="s" style="left:956px;top:586px;" width="18" height="18" viewBox="0 0 18 18"><path d="M4.5 3.5l9 9M13.5 3.5l-9 9" stroke="#c5c5c5" stroke-width="1.1"/></svg>
<svg class="s" style="left:50px;top:620px;" width="16" height="16" viewBox="0 0 16 16"><circle cx="8" cy="8.1" r="3.6" fill="none" stroke="#6b6b6b" stroke-width="1.2"/></svg>
<div class="t m" style="left:67px;top:622.79px;"><span style="color:#cccccc">a240.anvil ~/tmp $ streamlit run streamlitprot.py</span></div>
<div class="t m" style="left:67px;top:656.79px;"><span style="color:#3b8eea;font-weight:bold">  You can now view your Streamlit app in your browser.</span></div>
<div class="t m" style="left:67px;top:690.79px;"><span style="color:#3b8eea">  URL: </span><span style="color:#e5e5e5;font-weight:bold">http://localhost:8501</span></div>
<div class="r" style="left:67px;top:721px;width:8px;height:17px;background:#aeafad;"></div>
<div class="r" style="left:978px;top:619px;width:3px;height:6px;background:#6b6b6b;"></div>
<div class="r" style="left:525px;top:790px;width:451px;height:108px;background:#252526;box-sizing:border-box;border:1px solid #303031;border-radius:3px;box-shadow:0 0 7px 1px rgba(0,0,0,0.4);"></div>
<svg class="s" style="left:535px;top:804px;" width="17" height="17" viewBox="0 0 17 17"><circle cx="8.6" cy="8" r="7" fill="none" stroke="#3794ff" stroke-width="1.2"/><path d="M8.6 6.8v5" stroke="#3794ff" stroke-width="1.4"/><circle cx="8.6" cy="4.6" r=".9" fill="#3794ff"/></svg>
<div class="t" style="left:557.40px;top:806.59px;font-size:13px;line-height:13px;color:#cccccc;font-family:'Liberation Sans', sans-serif;font-weight:normal;font-style:normal;transform:scaleX(1.0164);">Your application running on port 8501 is available.</div>
<div class="t" style="left:854.10px;top:806.59px;font-size:13px;line-height:13px;color:#3794ff;font-family:'Liberation Sans', sans-serif;font-weight:normal;font-style:normal;transform:scaleX(0.9471);">See all</div>
<div class="t" style="left:557.40px;top:828.99px;font-size:13px;line-height:13px;color:#3794ff;font-family:'Liberation Sans', sans-serif;font-weight:normal;font-style:normal;transform:scaleX(1.0520);">forwarded ports</div>
<svg class="s" style="left:921px;top:804px;" width="17" height="17" viewBox="0 0 17 17"><g fill="none" stroke="#c5c5c5" stroke-width="1.25"><path d="M34.33 21.74L34.33 25.66L30.73 26.12L30.15 27.53L32.37 30.40L29.60 33.17L26.73 30.95L25.32 31.53L24.86 35.13L20.94 35.13L20.48 31.53L19.07 30.95L16.20 33.17L13.43 30.40L15.65 27.53L15.07 26.12L11.47 25.66L11.47 21.74L15.07 21.28L15.65 19.87L13.43 17.00L16.20 14.23L19.07 16.45L20.48 15.87L20.94 12.27L24.86 12.27L25.32 15.87L26.73 16.45L29.60 14.23L32.37 17.00L30.15 19.87L30.73 21.28z" transform="translate(8.5 8) scale(0.6) translate(-22.9 -23.7)" stroke-width="2.1"/><circle cx="8.5" cy="8" r="2"/></g></svg>
<svg class="s" style="left:947px;top:804px;" width="17" height="17" viewBox="0 0 17 17"><path d="M4 3.8l9 9M13 3.8l-9 9" stroke="#c5c5c5" stroke-width="1.1"/></svg>
<div class="r" style="left:857px;top:855px;width:109px;height:28px;background:#0e639c;border-radius:2px;"></div>
<div class="t" style="left:868.50px;top:863.29px;font-size:13px;line-height:13px;color:#ffffff;font-family:'Liberation Sans', sans-serif;font-weight:normal;font-style:normal;transform:scaleX(0.8926);">Open in Browser</div>
<svg class="s" style="left:835px;top:826px;" width="155" height="80" viewBox="0 0 155 80"><path d="M63.6 9.0C68.2 8.9 77.7 9.2 85.0 9.3C92.3 9.4 101.2 9.2 107.5 9.6C113.8 10.0 118.2 10.6 122.6 11.5C127.0 12.4 131.1 13.8 133.8 15.3C136.5 16.8 137.4 18.2 139.0 20.5C140.6 22.8 142.7 26.0 143.6 28.8C144.6 31.5 144.8 34.6 144.7 37.0C144.6 39.4 143.6 41.1 142.8 43.0C142.0 44.9 141.3 46.4 139.8 48.3C138.3 50.2 136.0 52.5 133.8 54.3C131.5 56.0 129.2 57.3 126.3 58.8C123.4 60.3 121.0 62.1 116.6 63.4C112.2 64.7 105.3 65.7 100.0 66.5C94.7 67.3 90.7 67.5 85.0 68.0C79.3 68.5 72.2 69.4 65.6 69.4C59.0 69.4 51.6 68.9 45.4 67.9C39.2 66.9 33.1 65.6 28.2 63.3C23.3 61.0 18.7 57.8 16.0 54.3C13.3 50.7 12.8 45.9 12.0 42.0C11.2 38.1 10.8 34.0 11.0 31.0C11.2 28.0 12.5 26.2 13.5 24.0C14.5 21.8 15.4 19.6 17.0 18.0C18.6 16.4 20.8 15.4 23.0 14.5C25.2 13.6 25.4 13.2 30.0 12.6C34.6 12.0 45.9 11.3 50.5 10.9C55.1 10.5 55.3 10.3 57.5 10.0C59.7 9.7 59.0 9.1 63.6 9.0z" fill="none" stroke="#e81c1c" stroke-width="2.8" stroke-linejoin="round"/></svg>
<div class="r" style="left:0px;top:910px;width:988px;height:22px;background:#007acc;"></div>
<div class="r" style="left:0px;top:910px;width:33px;height:22px;background:#16825d;"></div>
<svg class="s" style="left:8px;top:913px;" width="18" height="16" viewBox="0 0 18 16"><path d="M3.8 5.3l4.1 4.1-4.1 4.1M12.2 2L8.6 5.8l3.6 3.7" stroke="#ffffff" stroke-width="1.2" fill="none"/></svg>
<svg class="s" style="left:40px;top:913px;" width="16" height="16" viewBox="0 0 16 16"><circle cx="8" cy="8" r="5.9" fill="none" stroke="#ffffff" stroke-width="1.1"/><path d="M5.6 5.6l4.8 4.8M10.4 5.6l-4.8 4.8" stroke="#ffffff" stroke-width="1.1"/></svg>
<div class="t" style="left:58.40px;top:916.44px;font-size:12px;line-height:12px;color:#ffffff;font-family:'Liberation Sans', sans-serif;font-weight:normal;font-style:normal;transform:scaleX(0.8358);">0</div>
<svg class="s" style="left:66px;top:913px;" width="16" height="16" viewBox="0 0 16 16"><path d="M8 2.3L14 13.5H2z" fill="none" stroke="#ffffff" stroke-width="1.1" stroke-linejoin="round"/><path d="M8 6.2v4M8 11.2v1.1" stroke="#ffffff" stroke-width="1.1"/></svg>
<div class="t" style="left:84.00px;top:916.44px;font-size:12px;line-height:12px;color:#ffffff;font-family:'Liberation Sans', sans-serif;font-weight:normal;font-style:normal;transform:scaleX(0.8955);">0</div>
<svg class="s" style="left:105px;top:913px;" width="17" height="16" viewBox="0 0 17 16"><g fill="none" stroke="#ffffff" stroke-width="1"><path d="M4.6 2Q1.6 5.9 4.6 9.8M6.4 3.4Q4.6 5.9 6.4 8.4M12.4 2Q15.4 5.9 12.4 9.8M10.6 3.4Q12.4 5.9 10.6 8.4"/><path d="M4.6 13.8L8.5 4.6l3.9 9.2M6.3 10.4h4.4"/></g><circle cx="8.5" cy="7.6" r="1" fill="#ffffff"/></svg>
<div class="t" style="left:122.80px;top:916.44px;font-size:12px;line-height:12px;color:#ffffff;font-family:'Liberation Sans', sans-serif;font-weight:normal;font-style:normal;transform:scaleX(0.8507);">3</div>
<div class="t" style="left:145.00px;top:916.44px;font-size:12px;line-height:12px;color:#ffffff;font-family:'Liberation Sans', sans-serif;font-weight:normal;font-style:normal;transform:scaleX(1.0326);">-- NORMAL --</div>
<div class="t" style="left:439.20px;top:916.44px;font-size:12px;line-height:12px;color:#ffffff;font-family:'Liberation Sans', sans-serif;font-weight:normal;font-style:normal;transform:scaleX(0.9821);">R: (not attached)</div>
<div class="t" style="left:543.60px;top:916.44px;font-size:12px;line-height:12px;color:#ffffff;font-family:'Liberation Sans', sans-serif;font-weight:normal;font-style:normal;transform:scaleX(0.9259);">Ln 1, Col 1</div>
<div class="t" style="left:614.60px;top:916.44px;font-size:12px;line-height:12px;color:#ffffff;font-family:'Liberation Sans', sans-serif;font-weight:normal;font-style:normal;transform:scaleX(0.8839);">Spaces: 4</div>
<div class="t" style="left:678.80px;top:916.44px;font-size:12px;line-height:12px;color:#ffffff;font-family:'Liberation Sans', sans-serif;font-weight:normal;font-style:normal;transform:scaleX(0.8824);">UTF-8</div>
<div class="t" style="left:725.80px;top:916.44px;font-size:12px;line-height:12px;color:#ffffff;font-family:'Liberation Sans', sans-serif;font-weight:normal;font-style:normal;transform:scaleX(0.8000);">LF</div>
<div class="t" style="left:753.60px;top:916.44px;font-size:12px;line-height:12px;color:#ffffff;font-family:'Liberation Sans', sans-serif;font-weight:normal;font-style:normal;transform:scaleX(0.9893);">Python</div>
<div class="t" style="left:807.60px;top:916.44px;font-size:12px;line-height:12px;color:#ffffff;font-family:'Liberation Sans', sans-serif;font-weight:normal;font-style:normal;transform:scaleX(0.9635);">3.11.5 64-bit</div>
<div class="t" style="left:887.60px;top:916.44px;font-size:12px;line-height:12px;color:#ffffff;font-family:'Liberation Sans', sans-serif;font-weight:normal;font-style:normal;transform:scaleX(0.9327);">Layout: US</div>
<svg class="s" style="left:958px;top:912px;" width="18" height="18" viewBox="0 0 18 18"><path d="M9 3.2a4 4 0 0 0-4 4v4.2L3.8 13.4h10.4L13 11.4V8" fill="none" stroke="#ffffff" stroke-width="1.1" stroke-linejoin="round"/><path d="M7.6 14.8a1.6 1.6 0 0 0 2.8 0" fill="none" stroke="#ffffff" stroke-width="1.1"/><circle cx="12.8" cy="4.8" r="2.3" fill="#ffffff"/></svg>
<div class="r" style="left:988px;top:0px;width:1px;height:932px;background:#1f7fd8;"></div>
<div class="r" style="left:989px;top:0px;width:1px;height:932px;background:#1f1c1a;"></div>
</body></html>
